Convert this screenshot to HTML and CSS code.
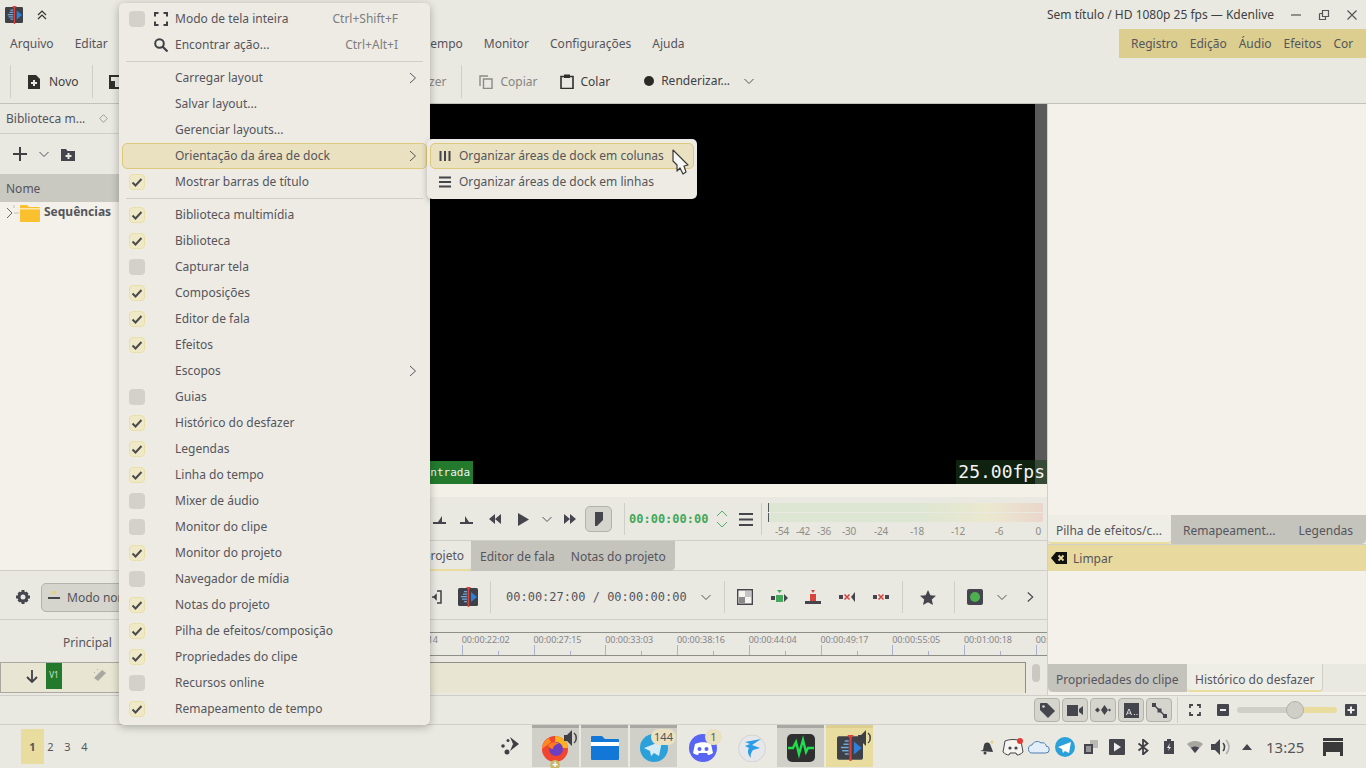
FILE: index.html
```html
<!DOCTYPE html>
<html lang="pt-BR">
<head>
<meta charset="utf-8">
<title>Kdenlive</title>
<link rel="stylesheet" href="styles.css">
</head>
<body>
<svg class="defs" width="0" height="0" aria-hidden="true">
  <symbol id="kden" viewBox="0 0 20 20">
    <rect x="0" y="1" width="20" height="18" rx="1.5" fill="#3f4148"/>
    <path d="M13 5l6 5-6 5z" fill="#2f7fd6"/>
    <path d="M3 9h6v1.2H3zM5 6.5h4v1.2H5zM6 4h3v1.2H6zM4 11.5h5v1.2H4zM6 14h3v1.2H6z" fill="#6fa8dc"/>
    <rect x="9.6" y="1" width="1.6" height="19" fill="#e0403a"/>
    <path d="M8 0h5l-2.5 3z" fill="#e0403a"/>
  </symbol>
  <symbol id="check" viewBox="0 0 12 12"><path d="M1.500 6.500l3 3 6-6.500" fill="none" stroke="#4a4a50" stroke-width="2"/></symbol>
  <symbol id="chev" viewBox="0 0 12 12"><path d="M1.500 4l4.500 4.500L10.500 4" fill="none" stroke="#55555c" stroke-width="1"/></symbol>
  <symbol id="right" viewBox="0 0 10 12"><path d="M2 1l5.500 5L2 11" fill="none" stroke="#55555c" stroke-width="1"/></symbol>
</svg>
<div class="app">
  <header class="titlebar">
    <svg class="appicon" width="18" height="18"><use href="#kden"/></svg>
    <svg class="keep" width="12" height="12" viewBox="0 0 12 12"><path d="M2 6l4-4 4 4M2 10l4-4 4 4" fill="none" stroke="#333" stroke-width="1.200"/></svg>
    <div class="wintitle">Sem título / HD 1080p 25 fps — Kdenlive</div>
    <div class="winbtns">
      <svg width="12" height="12" viewBox="0 0 12 12"><path d="M1 6h10" stroke="#555" stroke-width="1.200"/></svg>
      <svg width="12" height="12" viewBox="0 0 12 12"><path d="M4.500 1.500h6v6h-6zM1.500 4.500h3m-3 0v6h6v-3" fill="none" stroke="#555" stroke-width="1.200"/></svg>
      <svg width="12" height="12" viewBox="0 0 12 12"><path d="M1.500 1.500l9 9M10.500 1.500l-9 9" stroke="#555" stroke-width="1.200"/></svg>
    </div>
  </header>
  <nav class="menubar">
    <div class="menus"><span>Arquivo</span><span>Editar</span><span class="lt">Linha do tempo</span><span>Monitor</span><span>Configurações</span><span>Ajuda</span></div>
    <div class="activities"><span>Registro</span><span>Edição</span><span>Áudio</span><span>Efeitos</span><span>Cor</span></div>
  </nav>
  <div class="toolbar">
    <i class="tsep first"></i>
    <div class="tool novo"><svg width="14" height="14" viewBox="0 0 14 14"><path d="M1 0h8l4 4v10H1z" fill="#2f2f2c"/><path d="M6 5h2v2h2v2H8v2H6V9H4V7h2z" fill="#e9e8e1"/></svg><span>Novo</span></div>
    <i class="tsep second"></i>
    <svg class="abrir" width="14" height="14" viewBox="0 0 14 14"><path d="M0 0h14v14H0z" fill="#2f2f2c"/><path d="M2 2h10v10H6V6H2z" fill="#e9e8e1"/></svg>
    <div class="tool refazer dim"><span>Refazer</span></div>
    <i class="tsep third"></i>
    <div class="tool copiar dim"><svg width="14" height="14" viewBox="0 0 14 14"><path d="M1 11V1h8M4.500 4h8.500v9.500H4.500z" fill="none" stroke="#8b8b87" stroke-width="1.400"/></svg><span>Copiar</span></div>
    <div class="tool colar"><svg width="14" height="15" viewBox="0 0 14 15"><path d="M1 2.500h12v12H1z" fill="none" stroke="#2f2f2c" stroke-width="1.600"/><path d="M4 0.500h6V4H4z" fill="#2f2f2c"/></svg><span>Colar</span></div>
    <div class="tool render"><i class="recdot"></i><span>Renderizar...</span><svg class="renderchev" width="12" height="12"><use href="#chev"/></svg></div>
  </div>
  <div class="workspace">
    <div class="leftmain">
      <div class="upper">
        <section class="bin">
          <div class="bintab"><span>Biblioteca m...</span><svg width="9" height="9" viewBox="0 0 9 9"><path d="M4.500 0.700l3.800 3.800-3.800 3.800L.7 4.500z" fill="none" stroke="#888" stroke-width=".8"/></svg></div>
          <div class="bintools">
            <svg width="14" height="14" viewBox="0 0 14 14"><path d="M7 0v14M0 7h14" stroke="#3f3f46" stroke-width="2"/></svg>
            <svg class="binchev" width="12" height="12"><use href="#chev"/></svg>
            <svg class="binfolder" width="14" height="13" viewBox="0 0 14 13"><path d="M0 1h5l1.500 2H14v10H0z" fill="#45454d"/><path d="M6.500 5h2v2h2v2h-2v2h-2V9h-2V7h2z" fill="#e9e8e1"/></svg>
          </div>
          <div class="binhead">Nome</div>
          <div class="bintree">
            <svg width="13" height="16" viewBox="0 0 13 16"><path d="M8 0v3M8 8h5" stroke="#c2c1bb" fill="none"/><path d="M1 3l5 5-5 5" fill="none" stroke="#66666c"/></svg>
            <svg class="folder" width="20" height="18" viewBox="0 0 20 18"><path d="M0 2a1 1 0 0 1 1-1h6l2 2h10a1 1 0 0 1 1 1v13a1 1 0 0 1-1 1H1a1 1 0 0 1-1-1z" fill="#fbc02d"/><path d="M0 4h20v1.500H0z" fill="#fde9ad"/></svg>
            <b>Sequências</b>
          </div>
        </section>
        <section class="monitor">
          <div class="video">
            <i class="vscroll"></i>
            <span class="inlabel">Entrada</span>
            <span class="fps">25.00fps</span>
          </div>
          <div class="strip"></div>
          <div class="controls">
            <div class="slot"><svg width="14" height="10" viewBox="0 0 14 10"><path d="M0 8h13v2H0zM5 8l4-6v6z" fill="#45454d"/></svg></div>
            <div class="slot g1"><svg width="14" height="10" viewBox="0 0 14 10"><path d="M0 8h13v2H0zM9 8L5 2v6z" fill="#45454d"/></svg></div>
            <div class="slot g2"><svg width="14" height="10" viewBox="0 0 14 10"><path d="M7 0v10L1 5zM13 0v10L7 5z" fill="#45454d"/></svg></div>
            <div class="slot g2"><svg width="12" height="13" viewBox="0 0 12 13"><path d="M1 0l11 6.500L1 13z" fill="#45454d"/></svg></div>
            <div class="slot small g2"><svg width="12" height="12"><use href="#chev"/></svg></div>
            <div class="slot g1"><svg width="14" height="10" viewBox="0 0 14 10"><path d="M1 0v10l6-5zM7 0v10l6-5z" fill="#45454d"/></svg></div>
            <div class="markbtn"><svg width="10" height="14" viewBox="0 0 10 14"><path d="M1 0h8v8l-6 6H1z" fill="#45454d"/></svg></div>
            <i class="vsep a"></i>
            <span class="tc green">00:00:00:00</span>
            <svg class="spin" width="12" height="20" viewBox="0 0 12 20"><path d="M1 7l5-5 5 5M1 13l5 5 5-5" fill="none" stroke="#4caf6a" stroke-width="1"/></svg>
            <svg class="burger" width="14" height="13" viewBox="0 0 14 13"><path d="M0 1h14M0 6.500h14M0 12h14" stroke="#45454d" stroke-width="2"/></svg>
            <i class="vsep b"></i>
            <div class="meter">
              <div class="mbar"></div>
              <div class="mbar"></div>
              <div class="mscale"><span>-54</span><span>-42</span><span>-36</span><span>-30</span><span>-24</span><span>-18</span><span>-12</span><span>-6</span><span>0</span></div>
            </div>
          </div>
          <div class="montabs">
            <div class="mtab active">Monitor do projeto</div>
            <div class="mtabgroup"><span>Editor de fala</span><span>Notas do projeto</span></div>
          </div>
        </section>
      </div>
      <section class="timeline">
        <div class="tlbar">
          <div class="tlleft">
            <svg class="gear" width="16" height="16" viewBox="0 0 16 16"><path d="M6.500 1h3v3h-3zM6.500 12h3v3h-3zM1 6.500h3v3H1zM12 6.500h3v3h-3zM2.500 4.500l2-2 2 2-2 2zM9.500 4.500l2-2 2 2-2 2zM2.500 11.500l2-2 2 2-2 2zM9.500 11.500l2-2 2 2-2 2z" fill="#45454d"/><circle cx="8" cy="8" r="4" fill="none" stroke="#45454d" stroke-width="3"/></svg>
            <div class="modebtn"><svg width="12" height="12" viewBox="0 0 12 12"><path d="M4 0h4v3H4z" fill="#e3d27f"/><path d="M0 6h12v2H0z" fill="#45454d"/></svg><span>Modo normal</span></div>
          </div>
          <div class="slot ins"><svg width="14" height="14" viewBox="0 0 14 14"><path d="M9 1h4v12H9M0 7h2M4 7h2m0 0L8 5v4z" fill="none" stroke="#3f3f46" stroke-width="1.500"/></svg></div>
          <svg class="tlkden" width="20" height="20"><use href="#kden"/></svg>
          <i class="vsep c"></i>
          <span class="tc totals">00:00:27:00 / 00:00:00:00</span>
          <svg class="tlchev" width="12" height="12"><use href="#chev"/></svg>
          <i class="vsep d"></i>
          <div class="slot w34 first"><svg width="16" height="16" viewBox="0 0 16 16"><path d="M.7.7h14.600v14.600H.700z" fill="#f5f4ee" stroke="#45454d" stroke-width="1.400"/><path d="M8 2h6v6H8z" fill="#c4c4c4"/><path d="M2 8h6v6H2z" fill="#8a8a8a"/></svg></div>
          <div class="slot w34"><svg width="17" height="14" viewBox="0 0 17 14"><path d="M0 6h4v4H0z" fill="#45454d"/><path d="M5 5h7v7H5z" fill="#43a857"/><path d="M6 0h5L8.500 3z" fill="#43a857"/><path d="M13 4l4 4-4 4z" fill="#45454d"/></svg></div>
          <div class="slot w34"><svg width="16" height="14" viewBox="0 0 16 14"><path d="M0 11h16v3H0z" fill="#45454d"/><path d="M5 4h6v7H5z" fill="#d9443e"/><path d="M6 0h4L8 3z" fill="#d9443e"/></svg></div>
          <div class="slot w34"><svg width="16" height="10" viewBox="0 0 16 10"><path d="M0 3h4v4H0z" fill="#45454d"/><path d="M5.500 2.500l5 5m0-5l-5 5" stroke="#d9443e" stroke-width="1.600"/><path d="M16 0v10l-4-5z" fill="#45454d"/></svg></div>
          <div class="slot w34"><svg width="16" height="8" viewBox="0 0 16 8"><path d="M0 2h4v4H0zM12 2h4v4h-4z" fill="#45454d"/><path d="M5.500 1.500l5 5m0-5l-5 5" stroke="#d9443e" stroke-width="1.600"/></svg></div>
          <i class="vsep e"></i>
          <div class="slot w34 star"><svg width="16" height="15" viewBox="0 0 16 15"><path d="M8 0l2.400 5.200 5.600.6-4.200 3.700 1.200 5.500L8 12.200 3 15l1.200-5.500L0 5.800l5.600-.6z" fill="#45454d"/></svg></div>
          <i class="vsep f"></i>
          <div class="slot w34 rec"><svg width="16" height="16" viewBox="0 0 16 16"><rect width="16" height="16" rx="2" fill="#45454d"/><circle cx="8" cy="8" r="5" fill="#4caf50"/></svg></div>
          <div class="slot small rc"><svg width="12" height="12"><use href="#chev"/></svg></div>
          <div class="slot small more"><svg width="9" height="14" viewBox="0 0 10 12"><path d="M2 1l5.500 5L2 11" fill="none" stroke="#45454d" stroke-width="1.200"/></svg></div>
        </div>
        <div class="rulerrow">
          <div class="rulerhead">Principal</div>
          <div class="ruler">
            <span>00:00:16:14</span><span>00:00:22:02</span><span>00:00:27:15</span><span>00:00:33:03</span><span>00:00:38:16</span><span>00:00:44:04</span><span>00:00:49:17</span><span>00:00:55:05</span><span>00:01:00:18</span><span>00:01:06:06</span>
          </div>
        </div>
        <div class="trackrow">
          <div class="trackhead">
            <svg width="12" height="13" viewBox="0 0 12 13"><path d="M6 0v12M1 7l5 5 5-5" fill="none" stroke="#3f3f46" stroke-width="1.800"/></svg>
            <span class="v1">V1</span>
            <svg class="wand" width="14" height="14" viewBox="0 0 14 14"><path d="M1 10l8-8 4 3-8 8z" fill="#a8a8a3"/><path d="M1 4h1v1H1zM4 1h1v1H4z" fill="#a8a8a3"/></svg>
          </div>
          <div class="track"></div>
          <i class="tscroll"></i>
        </div>
      </section>
    </div>
    <aside class="rightdock">
      <div class="rtop"></div>
      <div class="rtabs">
        <div class="rtab active">Pilha de efeitos/c...</div>
        <div class="rtabgroup"><span>Remapeament...</span><span>Legendas</span></div>
      </div>
      <div class="limpar"><svg width="16" height="12" viewBox="0 0 16 12"><path d="M5 0h11v12H5L0 6z" fill="#111"/><path d="M7.500 3.500l5 5m0-5l-5 5" stroke="#e8da9e" stroke-width="1.800"/></svg><span>Limpar</span></div>
      <div class="rbody"></div>
      <div class="rbtabs"><span class="off">Propriedades do clipe</span><span class="on">Histórico do desfazer</span></div>
    </aside>
  </div>
  <div class="statusbar">
    <div class="sbtn"><svg width="15" height="15" viewBox="0 0 15 15"><path d="M0 1a1 1 0 0 1 1-1h6l8 8-7 7-8-8z" fill="#45454d"/><circle cx="3.500" cy="3.500" r="1.300" fill="#d9d8d1"/></svg></div>
    <div class="sbtn"><svg width="16" height="11" viewBox="0 0 16 11"><path d="M0 0h11v11H0zM12 4l4-3v9l-4-3z" fill="#45454d"/></svg></div>
    <div class="sbtn"><svg width="16" height="10" viewBox="0 0 16 10"><path d="M0 5l2.500-2.500L5 5 2.500 7.500zM6 5l3.500-5L13 5 9.500 10zM13 5l1.500-1.500L16 5l-1.500 1.500z" fill="#45454d"/></svg></div>
    <div class="sbtn"><svg width="15" height="15" viewBox="0 0 15 15"><path d="M0 0h15v15H0z" fill="#45454d"/><path d="M2 12l2.500-6h1L8 12H7l-.5-1.500h-3L3 12zM3.800 9.700h2.400L5 6.800zM10 11h1v1h-1zM12.500 11h1v1h-1z" fill="#eee"/></svg></div>
    <div class="sbtn"><svg width="15" height="15" viewBox="0 0 15 15"><path d="M2 2l11 11" stroke="#45454d" stroke-width="1.400"/><path d="M0 0h4v4H0zM5.500 5.500h4v4h-4zM11 11h4v4h-4z" fill="#45454d"/></svg></div>
    <i class="ssep"></i>
    <svg class="sfull" width="12" height="12" viewBox="0 0 12 12"><path d="M1 4V1h3M8 1h3v3M11 8v3H8M4 11H1V8" fill="none" stroke="#45454d" stroke-width="1.800"/></svg>
    <svg class="sminus" width="12" height="12" viewBox="0 0 12 12"><rect width="12" height="12" rx="1" fill="#45454d"/><path d="M3 5h6v2H3z" fill="#eee"/></svg>
    <div class="slider"><i class="knob"></i></div>
    <svg class="splus" width="12" height="12" viewBox="0 0 12 12"><rect width="12" height="12" rx="1" fill="#45454d"/><path d="M5 2.500h2V5h2.500v2H7v2.500H5V7H2.500V5H5z" fill="#eee"/></svg>
  </div>
  <footer class="panel">
    <div class="pager"><span class="cur">1</span><span>2</span><span>3</span><span>4</span></div>
    <svg class="launcher" width="20" height="18" viewBox="0 0 20 18"><path d="M10 1l9 7-9 7 3-7z" fill="#3f3f46" transform="translate(0 -1)"/><circle cx="3" cy="9" r="1.800" fill="#3f3f46"/><circle cx="8" cy="3.500" r="1.500" fill="#3f3f46"/><circle cx="7" cy="15" r="2.500" fill="#3f3f46"/></svg>
    <div class="tasks">
      <div class="task open">
        <svg width="30" height="30" viewBox="0 0 30 30"><circle cx="14" cy="16" r="13" fill="#f0452f"/><path d="M14 3a13 13 0 0 1 13 12H14z" fill="#ffb01f"/><path d="M1 16a13 13 0 0 1 7-11l2 4z" fill="#ff8a22"/><circle cx="15" cy="16" r="7" fill="#6b3fc0"/><path d="M7 12c3-3 8-4 11-1-3 0-6 2-6 5-3 0-4-2-5-4z" fill="#ff7a1f"/></svg>
        <svg class="spk" width="14" height="16" viewBox="0 0 14 16"><path d="M0 5h3l5-5v16l-5-5H0z" fill="#3f3f46"/><path d="M10 3c3 2 3 8 0 10" fill="none" stroke="#3f3f46" stroke-width="1.500"/></svg>
        <span class="plus">+</span>
      </div>
      <div class="task open">
        <svg width="28" height="26" viewBox="0 0 28 26"><path d="M0 2a1 1 0 0 1 1-1h10l3 3h13a1 1 0 0 1 1 1v19a1 1 0 0 1-1 1H1a1 1 0 0 1-1-1z" fill="#1277d6"/><path d="M0 7h28v4H0z" fill="#fff"/></svg>
      </div>
      <div class="task open">
        <svg width="28" height="28" viewBox="0 0 28 28"><circle cx="14" cy="14" r="14" fill="#2aa1da"/><path d="M4 14l18-7-3 15-5-3-3 3-1-5z" fill="#d5ecf7"/></svg>
        <span class="badge wide">144</span>
      </div>
      <div class="task">
        <svg width="28" height="28" viewBox="0 0 28 28"><circle cx="14" cy="14" r="14" fill="#5865f2"/><path d="M6 10c5-2.500 11-2.500 16 0l2 9c-2 1.500-4 2-5 2l-1-2H10l-1 2c-1 0-3-.5-5-2z" fill="#fff"/><circle cx="10.500" cy="15" r="2" fill="#5865f2"/><circle cx="17.500" cy="15" r="2" fill="#5865f2"/></svg>
        <span class="badge">1</span>
      </div>
      <div class="task">
        <svg width="28" height="28" viewBox="0 0 28 28"><circle cx="14" cy="14.500" r="13.500" fill="#e6e7ea" stroke="#d3d3d0"/><path d="M7 8l16-3-9 6 8 3-7 2c-2 3-3 5-2 8-3-3-4-7-2-10L7 12l5-2z" fill="#2a9de8"/></svg>
      </div>
      <div class="task open">
        <svg width="28" height="28" viewBox="0 0 28 28"><rect width="28" height="28" rx="5" fill="#2f2f2f"/><path d="M1 14h5l3-6 3 12 4-14 3 12 2-4h6" fill="none" stroke="#1ee04e" stroke-width="2.400"/></svg>
      </div>
      <div class="task current">
        <svg width="28" height="26"><use href="#kden"/></svg>
        <svg class="spk" width="14" height="16" viewBox="0 0 14 16"><path d="M0 5h3l5-5v16l-5-5H0z" fill="#3f3f46"/><path d="M10 3c3 2 3 8 0 10" fill="none" stroke="#3f3f46" stroke-width="1.500"/></svg>
      </div>
    </div>
    <div class="tray">
      <div class="ti"><svg width="16" height="16" viewBox="0 0 16 16"><path d="M1 12l3-1 1-5c1-3 4-3 6-1l2 5 1 3z" fill="#3f3f46"/><circle cx="6" cy="14" r="1.500" fill="#3f3f46"/><circle cx="13" cy="3" r="1.500" fill="#e3d27f"/></svg></div>
      <div class="ti"><svg width="22" height="18" viewBox="0 0 22 18"><path d="M3 3c5-2 11-2 16 0l2 11c-2 2-4 3-6 3l-1-2H8l-1 2c-2 0-4-1-6-3z" fill="#f5f4ee" stroke="#45454d" stroke-width="1"/><circle cx="8" cy="10" r="1.600" fill="#45454d"/><circle cx="14" cy="10" r="1.600" fill="#45454d"/><circle cx="18" cy="3" r="3" fill="#e53935"/></svg></div>
      <div class="ti"><svg width="22" height="14" viewBox="0 0 22 14"><path d="M5 13a4 4 0 0 1-1-8c1-3 6-5 9-2 3-1 5 1 5 3a3.500 3.500 0 0 1-.5 7z" fill="#e4eef8" stroke="#4a7fb5" stroke-width="1"/></svg></div>
      <div class="ti"><svg width="20" height="20" viewBox="0 0 20 20"><circle cx="10" cy="10" r="10" fill="#2aa1da"/><path d="M3 10l13-5-2 11-4-2-2 2-1-4z" fill="#fff"/></svg></div>
      <div class="ti"><svg width="16" height="16" viewBox="0 0 16 16"><path d="M7 1h8v8H7z" fill="#b9b8b2"/><path d="M1 5h9v10H1z" fill="#45454d"/><path d="M3 8h5M3 10h5M3 12h5" stroke="#e9e8e1"/></svg></div>
      <div class="ti"><svg width="16" height="16" viewBox="0 0 16 16"><rect width="16" height="16" rx="1" fill="#45454d"/><path d="M5 3.500l7 4.500-7 4.500z" fill="#eee"/></svg></div>
      <div class="ti"><svg width="12" height="16" viewBox="0 0 12 16"><path d="M1.500 4.500l9 7-4.500 4V.5l4.500 4-9 7" fill="none" stroke="#3f3f46" stroke-width="1.800"/></svg></div>
      <div class="ti"><svg width="10" height="15" viewBox="0 0 10 15"><path d="M3 0h4v2h3v13H0V2h3z" fill="#45454d"/><path d="M6 4L3 9h2l-1 3 3-4H5z" fill="#eee"/></svg></div>
      <div class="ti"><svg width="16" height="12" viewBox="0 0 16 12"><path d="M0 3c4-4 12-4 16 0l-8 9z" fill="#a7a6a0"/><path d="M4 7c2-2 6-2 8 0l-4 5z" fill="#45454d"/></svg></div>
      <div class="ti"><svg width="20" height="18" viewBox="0 0 20 18"><path d="M0 6h4l5-5v16l-5-5H0z" fill="#45454d"/><path d="M12 5c2 2 2 6 0 8" fill="none" stroke="#45454d" stroke-width="1.600"/><path d="M15 2c4 4 4 10 0 14" fill="none" stroke="#b2b1ab" stroke-width="1.600"/></svg></div>
      <div class="ti"><svg width="10" height="6" viewBox="0 0 10 6"><path d="M0 6l5-6 5 6z" fill="#45454d"/></svg></div>
      <div class="clock">13:25</div>
      <svg class="showdesk" width="20" height="18" viewBox="0 0 20 18"><path d="M0 0h20v3H0z" fill="#3a3a3a"/><path d="M0 4h20v14h-3v-4H3v4H0z" fill="#3a3a3a"/></svg>
    </div>
  </footer>

  <div class="menu">
    <div class="mi"><span class="cb"></span><span class="ic"><svg width="14" height="14" viewBox="0 0 14 14"><path d="M1 4.500V1h3.500M9.500 1H13v3.500M13 9.500V13H9.500M4.500 13H1V9.500" fill="none" stroke="#3f3f46" stroke-width="2"/></svg></span><span class="lbl">Modo de tela inteira</span><span class="sc">Ctrl+Shift+F</span></div>
    <div class="mi"><span class="nocb"></span><span class="ic"><svg width="14" height="14" viewBox="0 0 14 14"><circle cx="5.500" cy="5.500" r="4.300" fill="none" stroke="#3f3f46" stroke-width="2"/><path d="M8.500 8.500l5 5" stroke="#3f3f46" stroke-width="2.200"/></svg></span><span class="lbl">Encontrar ação...</span><span class="sc">Ctrl+Alt+I</span></div>
    <div class="msep"></div>
    <div class="mi"><span class="nocb"></span><span class="ic"></span><span class="lbl">Carregar layout</span><svg class="arr" width="10" height="12"><use href="#right"/></svg></div>
    <div class="mi"><span class="nocb"></span><span class="ic"></span><span class="lbl">Salvar layout...</span></div>
    <div class="mi"><span class="nocb"></span><span class="ic"></span><span class="lbl">Gerenciar layouts...</span></div>
    <div class="mi hot"><span class="nocb"></span><span class="ic"></span><span class="lbl">Orientação da área de dock</span><svg class="arr" width="10" height="12"><use href="#right"/></svg></div>
    <div class="mi"><span class="cb on"><svg width="12" height="12"><use href="#check"/></svg></span><span class="ic"></span><span class="lbl">Mostrar barras de título</span></div>
    <div class="msep"></div>
    <div class="mi"><span class="cb on"><svg width="12" height="12"><use href="#check"/></svg></span><span class="ic"></span><span class="lbl">Biblioteca multimídia</span></div>
    <div class="mi"><span class="cb on"><svg width="12" height="12"><use href="#check"/></svg></span><span class="ic"></span><span class="lbl">Biblioteca</span></div>
    <div class="mi"><span class="cb"></span><span class="ic"></span><span class="lbl">Capturar tela</span></div>
    <div class="mi"><span class="cb on"><svg width="12" height="12"><use href="#check"/></svg></span><span class="ic"></span><span class="lbl">Composições</span></div>
    <div class="mi"><span class="cb on"><svg width="12" height="12"><use href="#check"/></svg></span><span class="ic"></span><span class="lbl">Editor de fala</span></div>
    <div class="mi"><span class="cb on"><svg width="12" height="12"><use href="#check"/></svg></span><span class="ic"></span><span class="lbl">Efeitos</span></div>
    <div class="mi"><span class="nocb"></span><span class="ic"></span><span class="lbl">Escopos</span><svg class="arr" width="10" height="12"><use href="#right"/></svg></div>
    <div class="mi"><span class="cb"></span><span class="ic"></span><span class="lbl">Guias</span></div>
    <div class="mi"><span class="cb on"><svg width="12" height="12"><use href="#check"/></svg></span><span class="ic"></span><span class="lbl">Histórico do desfazer</span></div>
    <div class="mi"><span class="cb on"><svg width="12" height="12"><use href="#check"/></svg></span><span class="ic"></span><span class="lbl">Legendas</span></div>
    <div class="mi"><span class="cb on"><svg width="12" height="12"><use href="#check"/></svg></span><span class="ic"></span><span class="lbl">Linha do tempo</span></div>
    <div class="mi"><span class="cb"></span><span class="ic"></span><span class="lbl">Mixer de áudio</span></div>
    <div class="mi"><span class="cb"></span><span class="ic"></span><span class="lbl">Monitor do clipe</span></div>
    <div class="mi"><span class="cb on"><svg width="12" height="12"><use href="#check"/></svg></span><span class="ic"></span><span class="lbl">Monitor do projeto</span></div>
    <div class="mi"><span class="cb"></span><span class="ic"></span><span class="lbl">Navegador de mídia</span></div>
    <div class="mi"><span class="cb on"><svg width="12" height="12"><use href="#check"/></svg></span><span class="ic"></span><span class="lbl">Notas do projeto</span></div>
    <div class="mi"><span class="cb on"><svg width="12" height="12"><use href="#check"/></svg></span><span class="ic"></span><span class="lbl">Pilha de efeitos/composição</span></div>
    <div class="mi"><span class="cb on"><svg width="12" height="12"><use href="#check"/></svg></span><span class="ic"></span><span class="lbl">Propriedades do clipe</span></div>
    <div class="mi"><span class="cb"></span><span class="ic"></span><span class="lbl">Recursos online</span></div>
    <div class="mi"><span class="cb on"><svg width="12" height="12"><use href="#check"/></svg></span><span class="ic"></span><span class="lbl">Remapeamento de tempo</span></div>
  </div>

  <div class="submenu">
    <div class="si hot"><svg width="12" height="12" viewBox="0 0 12 12"><path d="M1.500 1v10M6 1v10M10.500 1v10" stroke="#45454d" stroke-width="2"/></svg><span>Organizar áreas de dock em colunas</span></div>
    <div class="si"><svg width="12" height="12" viewBox="0 0 12 12"><path d="M0 1.500h12M0 6h12M0 10.500h12" stroke="#45454d" stroke-width="2"/></svg><span>Organizar áreas de dock em linhas</span></div>
  </div>

  <svg class="cursor" width="20" height="27" viewBox="0 0 20 27"><path d="M2 1l15 15-4 1 2 6-3 2-3-6-3 3 0-6-4-4z" fill="#f7f7f4" stroke="#3a3a3a" stroke-width="1.200" stroke-linejoin="round"/></svg>
</div>
</body>
</html>
```
FILE: styles.css
```css
* { box-sizing: border-box; }
html, body { margin: 0; padding: 0; width: 1366px; height: 768px; overflow: hidden; }
body { font-family: "Noto Sans", sans-serif; font-size: 12px; color: #55555c; background: #e9e8e1; }
svg { display: block; flex: none; }
i { display: block; flex: none; }
.defs { position: absolute; }
.app { position: relative; width: 1366px; height: 768px; display: flex; flex-direction: column; overflow: hidden; }

/* title */
.titlebar { height: 29px; display: flex; align-items: center; padding-left: 5px; flex: none; }
.keep { margin-left: 13px; }
.wintitle { margin-left: auto; color: #3f3f3f; }
.winbtns { display: flex; gap: 16px; margin-left: 16px; padding-right: 8px; }

/* menu bar */
.menubar { height: 29px; display: flex; justify-content: space-between; flex: none; }
.menus { display: flex; gap: 21px; padding-left: 10px; align-items: center; }
.lt { width: 334px; text-align: right; }
.activities { width: 247px; background: #dbce8e; display: flex; align-items: center; gap: 12px; padding-left: 12px; }

/* tool bar */
.toolbar { height: 46px; display: flex; align-items: center; padding-top: 2px; border-bottom: 1px solid #c2c1bb; flex: none; color: #3f3f3f; }
.tsep { width: 1px; height: 33px; background: #cfcec8; }
.tsep.first { margin-left: 10px; }
.tsep.second { margin-left: 13px; }
.tsep.third { margin-left: 14px; }
.tool { display: flex; align-items: center; gap: 8px; }
.novo { margin-left: 16px; }
.abrir { margin-left: 16px; }
.refazer { margin-left: 300px; width: 24px; overflow: hidden; justify-content: flex-end; flex: none; }
.refazer span { flex: none; }
.dim { color: #85857f; }
.copiar { margin-left: 17px; }
.colar { margin-left: 22px; gap: 7px; }
.render { margin-left: 34px; margin-bottom: 2px; gap: 7px; }
.recdot { width: 10px; height: 10px; border-radius: 50%; background: #2a2a27; }
.renderchev { margin-left: 6px; }

/* workspace */
.workspace { height: 591px; display: flex; flex: none; }
.leftmain { width: 1048px; display: flex; flex-direction: column; border-right: 1px solid #d0cfc9; flex: none; }
.upper { height: 467px; display: flex; border-bottom: 1px solid #cfcec8; flex: none; }

/* bin */
.bin { width: 400px; display: flex; flex-direction: column; background: #f3f1e9; flex: none; }
.bintab { height: 30px; display: flex; align-items: center; gap: 14px; padding-left: 6px; background: #e9e8e1; border-bottom: 1px solid #cfcec8; flex: none; }
.bintools { height: 40px; display: flex; align-items: center; padding-left: 13px; background: #e9e8e1; flex: none; }
.binchev { margin-left: 11px; }
.binfolder { margin-left: 11px; }
.binhead { height: 28px; line-height: 29px; padding-left: 6px; background: #c9c8c1; flex: none; }
.bintree { display: flex; align-items: center; height: 20px; padding-left: 6px; margin-top: 1px; flex: none; }
.bintree .folder { margin-left: 1px; }
.bintree b { margin-left: 4px; margin-top: -3px; }

/* monitor */
.monitor { width: 647px; display: flex; flex-direction: column; flex: none; }
.video { position: relative; height: 380px; background: #000; flex: none; }
.inlabel { position: absolute; left: 7px; bottom: 0; height: 23px; width: 66px; background: #237a2c; color: #f0f0f0; font: 11px/23px "DejaVu Sans Mono", monospace; padding-right: 3px; text-align: right; }
.fps { position: absolute; right: 0; bottom: 0; height: 24px; width: 91px; background: rgba(28,60,28,.55); color: #f4f4f4; font: 18px/24px "DejaVu Sans Mono", monospace; text-align: right; padding-right: 2px; }
.vscroll { position: absolute; right: 0; top: 0; width: 12px; height: 380px; background: #5a5a5a; }
.strip { height: 13px; background: #f3f0e8; flex: none; }
.controls { height: 44px; display: flex; align-items: center; padding-left: 27px; padding-top: 1px; border-bottom: 1px solid #cfcec8; flex: none; }
.slot { width: 26px; height: 26px; display: flex; align-items: center; justify-content: center; flex: none; }
.g1 { margin-left: 1px; }
.g2 { margin-left: 2px; }
.slot.small { width: 18px; }
.markbtn { width: 27px; height: 26px; margin-left: 2px; background: #d5d4cd; border: 1px solid #b3b2ab; border-radius: 5px; display: flex; align-items: center; justify-content: center; flex: none; }
.vsep { width: 1px; height: 32px; background: #cfcec8; }
.vsep.a { margin-left: 12px; }
.vsep.b { margin-left: 8px; }
.tc { font: 12px/16px "DejaVu Sans Mono", monospace; flex: none; }
.green { color: #43a85a; margin-left: 4px; width: 80px; font-weight: 700; }
.spin { margin-left: 7px; }
.burger { margin-left: 11px; }
.meter { width: 275px; margin-left: 6px; display: flex; flex-direction: column; gap: 1px; flex: none; padding-top: 2px; }
.mbar { height: 9px; border-left: 1px solid #55555c; background: linear-gradient(90deg, #dde6d2 0%, #dde6d2 55%, #ebe8cf 80%, #ead6cc 100%); }
.mscale { display: grid; grid-template-columns: 28px 14px 28px 22px 42px 30px 52px 30px 28px; justify-items: center; font-size: 10px; line-height: 14px; color: #8d8d88; letter-spacing: -.3px; margin-top: 1px; }
.mscale span:last-child { justify-self: end; margin-right: 1px; }
.montabs { height: 30px; display: flex; align-items: stretch; flex: none; }
.mtab { width: 71px; background: #e9e8e1; border-bottom: 2px solid #e8dc9f; line-height: 29px; color: #55555c; text-align: right; padding-right: 7px; border-radius: 0 0 4px 4px; flex: none; white-space: nowrap; overflow: hidden; direction: rtl; }
.mtabgroup { display: flex; align-items: center; gap: 16px; background: #c4c3bc; padding: 0 9px; border-radius: 0 0 5px 0; flex: none; }

/* timeline */
.timeline { flex: 1; display: flex; flex-direction: column; min-height: 0; }
.tlbar { height: 49px; display: flex; align-items: center; padding-top: 4px; border-bottom: 1px solid #cfcec8; flex: none; }
.tlleft { width: 425px; display: flex; align-items: center; padding-left: 15px; flex: none; }
.modebtn { margin-left: 10px; display: flex; align-items: center; gap: 7px; width: 120px; height: 29px; padding-left: 6px; background: #d5d4cd; border: 1px solid #b3b2ab; border-radius: 5px; flex: none; }
.slot.ins { width: 20px; }
.tlkden { margin-left: 13px; }
.vsep.c { margin-left: 12px; }
.vsep.d { margin-left: 12px; }
.vsep.e { margin-left: 4px; }
.vsep.f { margin-left: 9px; }
.totals { margin-left: 15px; width: 181px; color: #55555c; }
.tlchev { margin-left: 13px; }
.slot.w34 { width: 34px; }
.slot.w34.first { margin-left: 3px; }
.slot.w34.star { margin-left: 8px; }
.slot.w34.rec { margin-left: 3px; }
.slot.rc { margin-left: 1px; }
.slot.more { margin-left: 10px; }
.rulerrow { height: 42px; display: flex; flex: none; }
.rulerhead { width: 175px; line-height: 46px; text-align: center; flex: none; margin-right: 215px; }
.ruler { width: 657px; margin-top: 12px; height: 24px; overflow: hidden; display: grid; grid-template-columns: repeat(10, 71.75px); border-top: 1px solid #8f8f8a; border-bottom: 1px solid #8f8f8a; flex: none; background: #e9e8e1; }
.ruler span { width: 71.75px; font-size: 9px; line-height: 13px; color: #85858a; white-space: nowrap; text-align: left; letter-spacing: -.05px; background: linear-gradient(#aab0cf, #aab0cf) left bottom / 1px 10px no-repeat, linear-gradient(#aab0cf, #aab0cf) 36px bottom / 1px 4px no-repeat; }
.trackrow { height: 32px; display: flex; flex: none; }
.trackhead { width: 119px; display: flex; align-items: flex-start; height: 31px; border: 1px solid #a9a8a2; border-right: 0; background: #e8e5d3; padding-left: 25px; flex: none; }
.trackhead > svg:first-child { margin-top: 7px; }
.v1 { width: 16px; height: 26px; margin-left: 8px; background: #237a2c; color: #cfe6cf; font-size: 8px; line-height: 24px; text-align: center; flex: none; }
.wand { margin-left: 31px; margin-top: 5px; }
.track { width: 907px; height: 31px; background: #e8e5d3; border-right: 1px solid #8f8f8a; border-top: 1px solid #8f8f8a; flex: none; }
.tscroll { width: 8px; height: 18px; background: #c9c8c1; border-radius: 4px; margin: 2px 0 0 6px; }

/* right dock */
.rightdock { flex: 1; display: flex; flex-direction: column; background: #f3f1e9; }
.rtop { height: 411px; flex: none; background: #f3f1e9; }
.rtabs { height: 30px; display: flex; background: #e9e8e1; border-bottom: 1px solid #cfcec8; flex: none; }
.rtab { width: 123px; padding-left: 8px; line-height: 31px; background: #eeede6; border-bottom: 2px solid #e8dc9f; border-radius: 0 0 4px 4px; white-space: nowrap; flex: none; }
.rtabgroup { flex: 1; display: flex; justify-content: space-between; padding: 2px 13px 0 12px; align-items: center; background: #c4c3bc; border-radius: 0 0 5px 0; }
.limpar { height: 26px; display: flex; align-items: center; gap: 6px; padding-left: 3px; background: #e8da9e; flex: none; }
.rbody { height: 93px; flex: none; }
.rbtabs { height: 28px; display: flex; background: #e9e8e1; margin-bottom: 3px; flex: none; }
.rbtabs span { line-height: 31px; white-space: nowrap; flex: none; }
.rbtabs .off { width: 139px; padding-left: 8px; background: #c4c3bc; border-radius: 0 0 0 5px; }
.rbtabs .on { width: 136px; padding-left: 8px; background: #eeede6; border-bottom: 2px solid #e8dc9f; border-right: 1px solid #cfcec8; border-radius: 0 0 4px 4px; }

/* status bar */
.statusbar { height: 30px; display: flex; align-items: center; padding-left: 1034px; gap: 2px; border-top: 1px solid #cfcec8; border-bottom: 1px solid #cfcec8; flex: none; }
.sbtn { width: 26px; height: 24px; background: #d5d4cd; border: 1px solid #b3b2ab; border-radius: 4px; display: flex; align-items: center; justify-content: center; flex: none; }
.ssep { width: 1px; height: 26px; background: #cfcec8; margin-left: 3px; }
.sfull { margin-left: 9px; }
.sminus { margin-left: 14px; }
.slider { position: relative; width: 100px; height: 6px; margin-left: 6px; border-radius: 3px; background: linear-gradient(90deg, #cfcec7 58%, #e8dc9f 58%); flex: none; }
.knob { position: absolute; left: 49px; top: -6px; width: 18px; height: 18px; border-radius: 50%; background: #cfcec7; border: 1px solid #b3b2ab; }
.splus { margin-left: 6px; }

/* panel */
.panel { height: 43px; display: flex; align-items: stretch; flex: 1; padding-left: 21px; }
.pager { display: flex; align-items: center; margin-top: 4px; height: 35px; flex: none; }
.pager span { width: 17px; text-align: center; font-size: 11px; }
.pager .cur { width: 23px; height: 35px; line-height: 35px; background: #e8dc9f; font-weight: 700; color: #55555c; margin-right: -2px; }
.launcher { margin: 12px 0 0 407px; }
.tasks { display: flex; gap: 2px; margin-left: 12px; flex: none; }
.task { position: relative; width: 47px; height: 42px; display: flex; align-items: center; justify-content: center; border-top: 3px solid transparent; flex: none; }
.task.open { background: #d0cfc8; border-top-color: #a9a8a2; }
.task.current { background: #e8dc9f; border-top-color: #dbce8e; }
.spk { position: absolute; right: 1px; top: 2px; }
.plus { position: absolute; left: 18px; bottom: -3px; width: 10px; height: 10px; border-radius: 50%; background: #c9b964; color: #fff; font-size: 10px; line-height: 9px; text-align: center; font-weight: 700; }
.badge { position: absolute; right: 4px; top: 1px; min-width: 17px; height: 16px; padding: 0 2px; border-radius: 9px; background: #e9e1c0; font-size: 11px; line-height: 16px; text-align: center; color: #55555c; }
.badge.wide { right: 1px; width: 25px; }
.tray { display: flex; align-items: center; margin-left: 101px; flex: none; }
.ti { width: 26px; height: 26px; display: flex; align-items: center; justify-content: center; flex: none; }
.clock { margin-left: 6px; width: 38px; font-size: 15px; color: #55555c; flex: none; text-align: center; }
.showdesk { margin-left: 19px; }

/* popup menus */
.menu { position: absolute; left: 119px; top: 3px; width: 311px; height: 722px; padding: 3px; background: #edebe4; border-radius: 5px; box-shadow: 0 2px 8px rgba(0,0,0,.28); display: flex; flex-direction: column; }
.mi { height: 26px; display: flex; align-items: center; padding-left: 6px; border: 1px solid transparent; border-radius: 5px; flex: none; }
.mi.hot { background: #e9e1c0; border-color: #dcc97c; }
.cb { width: 16px; height: 16px; background: #d2d1ca; border-radius: 4px; display: flex; align-items: center; justify-content: center; flex: none; }
.cb.on { background: #f0e9c8; border: 1px solid #eadfa8; }
.nocb { width: 16px; flex: none; }
.ic { width: 14px; height: 14px; margin-left: 9px; flex: none; }
.lbl { margin-left: 7px; margin-top: -2px; }
.sc { margin-left: auto; margin-right: 28px; margin-top: -2px; color: #7d7d7d; }
.arr { margin-left: auto; margin-right: 8px; }
.msep { height: 7px; flex: none; }
.msep::after { content: ""; display: block; height: 1px; margin: 3px 4px 0; background: #cfcec8; }
.submenu { position: absolute; left: 427px; top: 139px; width: 270px; height: 60px; padding: 4px 3px; background: #edebe4; border-radius: 5px; box-shadow: 0 2px 6px rgba(0,0,0,.25); }
.si { height: 26px; display: flex; align-items: center; gap: 8px; padding-left: 8px; border: 1px solid transparent; border-radius: 5px; }
.si.hot { background: #e9e1c0; border-color: #dcc97c; }
.si span { margin-top: -1px; }
.cursor { position: absolute; left: 671px; top: 149px; }
```
